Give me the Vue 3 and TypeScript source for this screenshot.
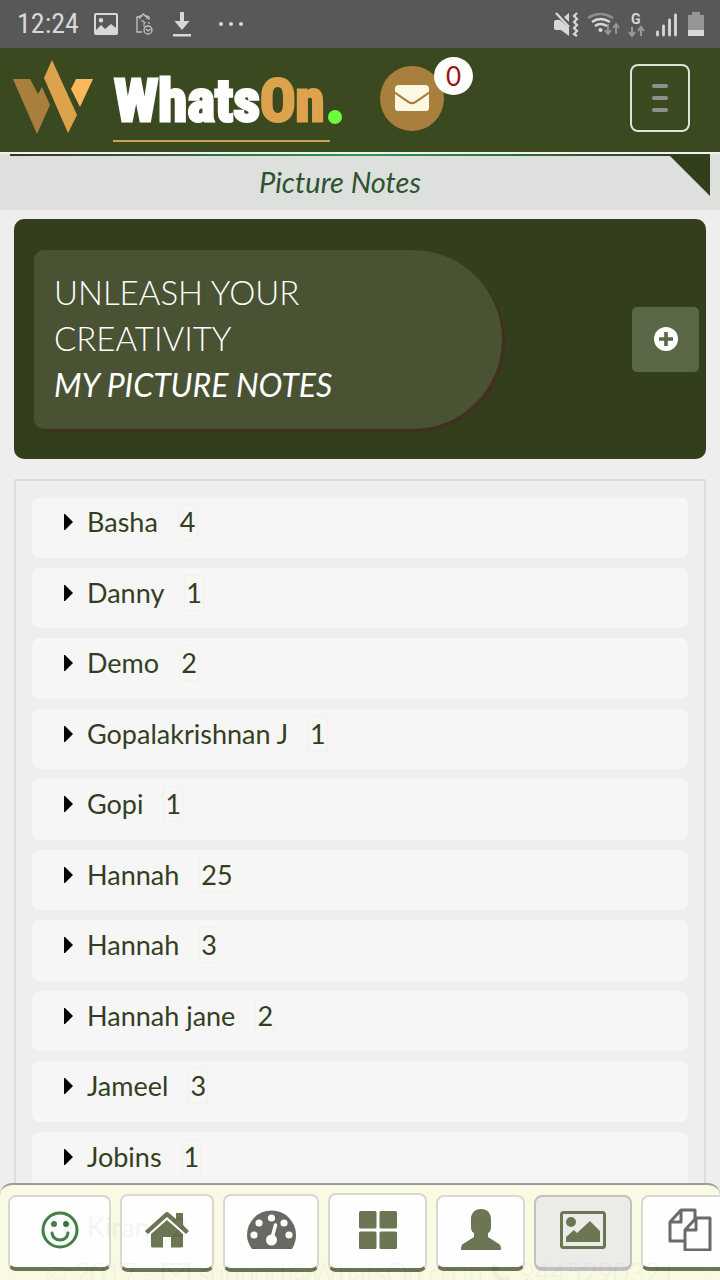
<script setup lang="ts">
interface Entry { name: string; count: number }
const entries: Entry[] = [
  { name: 'Basha', count: 4 },
  { name: 'Danny', count: 1 },
  { name: 'Demo', count: 2 },
  { name: 'Gopalakrishnan J', count: 1 },
  { name: 'Gopi', count: 1 },
  { name: 'Hannah', count: 25 },
  { name: 'Hannah', count: 3 },
  { name: 'Hannah jane', count: 2 },
  { name: 'Jameel', count: 3 },
  { name: 'Jobins', count: 1 },
  { name: 'Kiran', count: 2 },
]
</script>

<template>
  <div class="screen">
    <div class="status">
      <div class="status-left">
        <span class="clock">12:24</span>
        <svg class="s-photo" viewBox="0 0 24 22"><path fill="#d8d8d8" fill-rule="evenodd" d="M2 0h20a2 2 0 0 1 2 2v18a2 2 0 0 1-2 2H2a2 2 0 0 1-2-2V2a2 2 0 0 1 2-2zm0 2v15l5-5 4 4 6-5 5 4V2zM7 5a2.300 2.300 0 1 1 0 4.600A2.300 2.300 0 0 1 7 5z" /></svg>
        <svg class="s-clip" viewBox="0 0 17 23" fill="none" stroke="#c4c4c4" stroke-width="1.300"><path d="M4 4H1v15h5M10 4h3v3M13 9v2M4 6V3h2q1-4 3 0h2v3" /><path d="M5 8h3v3l2-2M8 11v3" stroke-width="1" /><circle cx="12" cy="17" r="4" /><path d="M10 16l2 2 3-2" /></svg>
        <svg class="s-down" viewBox="0 0 18 25" fill="#d8d8d8"><path d="M7 0h4v9h5.500L9 18 1.500 9H7zM0 22h18v2.500H0z" /></svg>
        <svg class="s-dots" viewBox="0 0 24 4" fill="#d8d8d8"><circle cx="2" cy="2" r="2" /><circle cx="12" cy="2" r="2" /><circle cx="22" cy="2" r="2" /></svg>
      </div>
      <svg class="s-right" viewBox="0 0 150 26">
        <g fill="#d8d8d8">
          <path d="M0 10q0-2 2-2h4l9 8v8l-8-6H2q-2 0-2-2zM10 5l5-4v9z" />
          <path d="M2 1l13 14" stroke="#d8d8d8" stroke-width="2.400" />
          <path d="M23 1l-3 3 3 3-3 3 3 3-3 3 3 3-3 3 3 2" fill="none" stroke="#d8d8d8" stroke-width="2.200" />
        </g>
        <g fill="none" stroke-width="2.400">
          <path d="M34 6q12-8 25 0" stroke="#909090" />
          <path d="M38 10q8-6 18 0M41 14q5-4 12 0" stroke="#d8d8d8" />
        </g>
        <circle cx="46.500" cy="18" r="2" fill="#d8d8d8" />
        <path d="M54 12v9M51 18l3 4 3-4M62 22v-9M59 16l3-4 3 4" fill="none" stroke="#999" stroke-width="1.800" />
        <text x="77" y="12" class="net">G</text>
        <path d="M78 15v9M75 20l3 4 3-4M87 24v-9M84 19l3-4 3 4" fill="none" stroke="#999" stroke-width="2" />
        <path d="M103.500 20v3M109.500 14v9M115.500 8v15M121.500 3v20" stroke="#d8d8d8" stroke-width="2.800" stroke-linecap="round" />
        <path d="M138 0h8v3h4v15h-16V3h4z" fill="#969696" /><path d="M134 18h16v6h-16z" fill="#d8d8d8" />
      </svg>
    </div>

    <header class="top">
      <svg class="logo" viewBox="0 0 80 74">
        <path fill="#aa7f3e" d="M0 19h17l8 15 4-7 8 18-13 29z" />
        <path fill="#dda24c" d="M39 0L31 18l24 55 9-18z" />
        <path fill="#fdb85b" d="M63 19h17L67 47l-9-18z" />
      </svg>
      <a class="brand" href="#"><span class="brand-a">Whats</span><span class="brand-b">On</span></a>
      <span class="brand-dot"></span>
      <button class="mail" aria-label="Messages">
        <svg viewBox="0 0 34 26"><path fill="#fdf8e2" d="M4 0h26a4 4 0 0 1 4 4v2.500L20 16q-3 2-6 0L0 6.500V4a4 4 0 0 1 4-4zM0 9l13 9q4 2.500 8 0l13-9v14a3 3 0 0 1-3 3H3a3 3 0 0 1-3-3z" /></svg>
        <span class="badge">0</span>
      </button>
      <button class="menu" aria-label="Menu"><i></i><i></i><i></i></button>
    </header>

    <div class="title">
      <div class="ribbon"></div>
      <h1>Picture Notes</h1>
      <span class="corner"></span>
    </div>

    <main>
      <section class="hero">
        <div class="pill"><p>UNLEASH YOUR CREATIVITY</p><h2>MY PICTURE NOTES</h2></div>
        <button class="add" aria-label="Add picture note">
          <svg viewBox="0 0 24 24"><circle cx="12" cy="12" r="12" fill="#fff" /><path d="M12 5v14M5 12h14" stroke="#5b6847" stroke-width="3.600" /></svg>
        </button>
      </section>
      <section class="frame">
        <details v-for="(e, i) in entries" :key="i">
          <summary>
            <svg class="tri" viewBox="0 0 9 16"><path d="M0 0h1l8 8-8 8H0z" /></svg>
            <span class="name">{{ e.name }}</span><span class="count">{{ e.count }}</span>
          </summary>
        </details>
      </section>
    </main>

    <footer>
      <span>© 2017 -</span>
      <svg class="f-mail" viewBox="0 0 28 20" fill="none" stroke="#333" stroke-width="2"><path d="M1 1h26v18H1zM1 2l13 10L27 2" /></svg>
      <span>support@WhatsOn.co.in</span>
      <svg class="f-tel" viewBox="0 0 20 20"><path fill="#333" d="M4 0l4 5-2 3q2 4 6 6l3-2 5 4-3 4Q1 19 0 3z" /></svg>
      <span>9445290321</span>
    </footer>

    <nav>
      <button class="w103 h76" aria-label="Feelings">
        <svg class="i38" viewBox="0 0 38 38"><circle cx="19" cy="19" r="17" fill="none" stroke="#397a3f" stroke-width="3" /><circle cx="13" cy="13" r="3" fill="#397a3f" /><circle cx="25" cy="13" r="3" fill="#397a3f" /><path d="M11 22q1 7 8 7t8-7" fill="none" stroke="#397a3f" stroke-width="3" stroke-linecap="round" /></svg>
      </button>
      <button class="w94 h78" aria-label="Home">
        <svg class="i44" viewBox="0 0 44 36" fill="#656f4c"><path d="M20 1q2-2 4 0l7 6V1h7v12l6 6-3 3L22 5 3 22l-3-3z" /><path d="M6 22L22 8l16 14v12a1.500 1.500 0 0 1-1.500 1.500H26V25h-8v10.500H7.500A1.500 1.500 0 0 1 6 34z" /></svg>
      </button>
      <button class="w96 h78" aria-label="Dashboard">
        <svg class="i48" viewBox="0 0 49 40"><path fill="#60625b" d="M5 39Q0 32 0 25a24.500 24.500 0 0 1 49 0q0 7-4 14z" /><g fill="#fdfefa"><circle cx="7" cy="25" r="3.600" /><circle cx="12" cy="13" r="3.600" /><circle cx="24.500" cy="8" r="3.600" /><circle cx="37" cy="13" r="3.600" /><circle cx="42" cy="25" r="3.600" /><circle cx="24.500" cy="30" r="5.500" /></g><path d="M25 28l3.500-13" stroke="#fdfefa" stroke-width="3.500" stroke-linecap="round" /></svg>
      </button>
      <button class="w99 h79" aria-label="Grid">
        <svg class="i38" viewBox="0 0 38 38" fill="#656f4c"><rect width="17.500" height="17.500" rx="1.500" /><rect x="20.500" width="17.500" height="17.500" rx="1.500" /><rect y="20.500" width="17.500" height="17.500" rx="1.500" /><rect x="20.500" y="20.500" width="17.500" height="17.500" rx="1.500" /></svg>
      </button>
      <button class="w89 h76" aria-label="Profile">
        <svg class="i40" viewBox="0 0 40 41"><path fill="#656f4c" d="M20 0c6 0 10 4 10 10v8q0 5-3 6v4l11 7q2 1 2 6H0q0-5 2-6l11-7v-4q-3-1-3-6v-8C10 4 14 0 20 0z" /></svg>
      </button>
      <button class="w98 h76 active" aria-label="Pictures">
        <svg class="i46" viewBox="0 0 46 38"><rect x="1.500" y="1.500" width="43" height="35" rx="2" fill="none" stroke="#656f4c" stroke-width="3" /><circle cx="11" cy="11" r="5" fill="#656f4c" /><path fill="#656f4c" d="M6 31v-5l8-7 3 3 13-12 10 10v11z" /></svg>
      </button>
      <button class="w98 h76" aria-label="Copy">
        <svg class="i44" viewBox="0 0 44 43" fill="none" stroke="#62645f" stroke-width="3" stroke-linejoin="round"><path d="M27 11V2H13L2 14v19h14M13 2v12H2" /><path d="M28 10h14v32H17V22zM28 10v12H17z" /></svg>
      </button>
    </nav>
  </div>
</template>

<style>
html, body { margin: 0; background: #eee; }
</style>
<style scoped>
* { box-sizing: border-box; }
.screen { height: 100vh; display: flex; flex-direction: column; overflow: hidden; font-family: Lato, sans-serif; background: #eee; position: relative; }
button { padding: 0; margin: 0; font: inherit; }
svg { display: block; flex: none; }
.status { flex: none; height: 48px; background: #585858; display: flex; align-items: center; justify-content: space-between; padding: 0 16px 0 17px; }
.status-left { display: flex; align-items: center; }
.clock { font-family: "Roboto Condensed", "Liberation Sans Narrow", Roboto, sans-serif; font-size: 28px; line-height: 50px; color: #d8d8d8; }
.s-photo { width: 24px; height: 22px; margin-left: 15px; }
.s-clip { width: 17px; height: 23px; margin-left: 18px; }
.s-down { width: 18px; height: 25px; margin-left: 20px; }
.s-dots { width: 24px; height: 4px; margin-left: 28px; }
.s-right { width: 150px; height: 26px; margin-top: 2px; overflow: visible; }
.net { font: bold 14px Roboto, sans-serif; fill: #d8d8d8; }
.top { flex: none; height: 104px; background: #3b4920; display: flex; align-items: center; padding: 0 30px 0 12px; }
.logo { width: 82px; height: 74px; margin-bottom: 6px; }
.brand { margin-left: 19px; width: 217px; height: 90px; margin-bottom: 6px; padding-left: 1px; border-bottom: 2px solid #d4a04e; font: bold 59px/98px "Roboto Condensed", "Liberation Sans Narrow", Roboto, sans-serif; text-decoration: none; white-space: nowrap; -webkit-text-stroke-width: 3px; }
.brand-a { color: #fff; }
.brand-b { color: #dda24c; }
.brand-dot { width: 14px; height: 14px; border-radius: 50%; background: #6cff3b; margin: 34px 0 0 -2px; }
.mail { position: relative; width: 64px; height: 65px; margin: 0 auto 4px 38px; border: 0; border-radius: 50%; background: #a97f3d; display: grid; place-items: center; }
.mail svg { width: 34px; height: 26px; }
.badge { position: absolute; left: 54px; top: -9px; width: 39px; height: 38px; border-radius: 50%; background: #fff; color: #9a1212; font-size: 26px; line-height: 38px; }
.menu { width: 60px; height: 68px; margin-bottom: 4px; border: 2px solid #dfe2d8; border-radius: 8px; background: none; display: flex; flex-direction: column; align-items: center; justify-content: center; gap: 8px; }
.menu i { width: 16px; height: 4px; border-radius: 2px; background: #8d908c; }
.title { position: relative; flex: none; height: 58px; background: #dee0de; border-top: 2px solid #eef2ea; }
.ribbon { height: 2px; margin: 0 10px; background: linear-gradient(90deg, #38341d, #2f9a50 50%, #323f1c 95%); }
h1 { margin: 0; padding-right: 40px; text-align: center; font-size: 29px; line-height: 52px; font-weight: 400; font-style: italic; color: #2d5331; }
.corner { position: absolute; right: 10px; top: 0; width: 42px; height: 42px; background: #323f1c; clip-path: polygon(0 0, 100% 0, 100% 100%); }
main { flex: 1; min-height: 0; padding: 9px 14px 0; }
.hero { height: 240px; background: #333f1c; border-radius: 10px; display: flex; align-items: center; justify-content: space-between; padding: 0 7px 0 20px; }
.pill { width: 468px; height: 179px; padding: 19px 190px 16px 20px; background: #495334; border-radius: 10px 90px 90px 10px; box-shadow: 3px 3px 0 #3f3020; color: #fff; }
.pill p, .pill h2 { margin: 0; font-size: 33px; line-height: 46px; font-weight: 300; }
.pill h2 { font-size: 32px; line-height: 48px; font-weight: 400; font-style: italic; white-space: nowrap; }
.add { width: 67px; height: 65px; border: 0; border-radius: 5px; background: #5b6847; display: grid; place-items: center; }
.add svg { width: 24px; height: 24px; }
.frame { margin-top: 20px; border: 2px solid #dcdddc; padding: 16px; display: flex; flex-direction: column; gap: 10px; }
details { background: #f6f6f6; border-radius: 8px; }
summary { display: flex; align-items: center; list-style: none; padding: 5px 0 15px 32px; font-size: 27px; line-height: 1.5; color: #333f1e; }
.tri { width: 9px; height: 16px; margin-right: 14px; }
.name { white-space: pre; }
.count { margin-left: 20px; padding: 0 1px; line-height: 34px; border: 1px solid #f2f1ea; }
footer { position: absolute; left: 0; right: 0; bottom: 0; height: 14px; display: flex; align-items: center; justify-content: center; gap: 8px; font-size: 27px; font-weight: 300; color: #333; white-space: nowrap; line-height: 30px; }
.f-mail { width: 28px; height: 20px; }
.f-tel { width: 20px; height: 20px; }
nav { position: absolute; left: 0; right: 0; bottom: 0; height: 97px; display: flex; align-items: center; gap: 9px; padding: 0 8px; overflow: hidden; background: #fafae4; border-top: 2px solid #989898; border-radius: 12px 12px 0 0; opacity: 0.95; }
nav button { flex: none; display: grid; place-items: center; padding-bottom: 4px; background: #fff; border: 2px solid #d7d8cf; border-bottom: 4px solid #656f4c; border-radius: 8px; }
nav .active { background: #ebece8; border: 2px solid #bfc0ba; border-bottom-width: 4px; }
.w103 { width: 103px; } .w94 { width: 94px; } .w96 { width: 96px; } .w99 { width: 99px; } .w89 { width: 89px; } .w98 { width: 98px; }
.h76 { height: 76px; } .h78 { height: 78px; } .h79 { height: 79px; }
.i38 { width: 38px; } .i44 { width: 44px; } .i48 { width: 49px; } .i40 { width: 40px; } .i46 { width: 46px; }
</style>
